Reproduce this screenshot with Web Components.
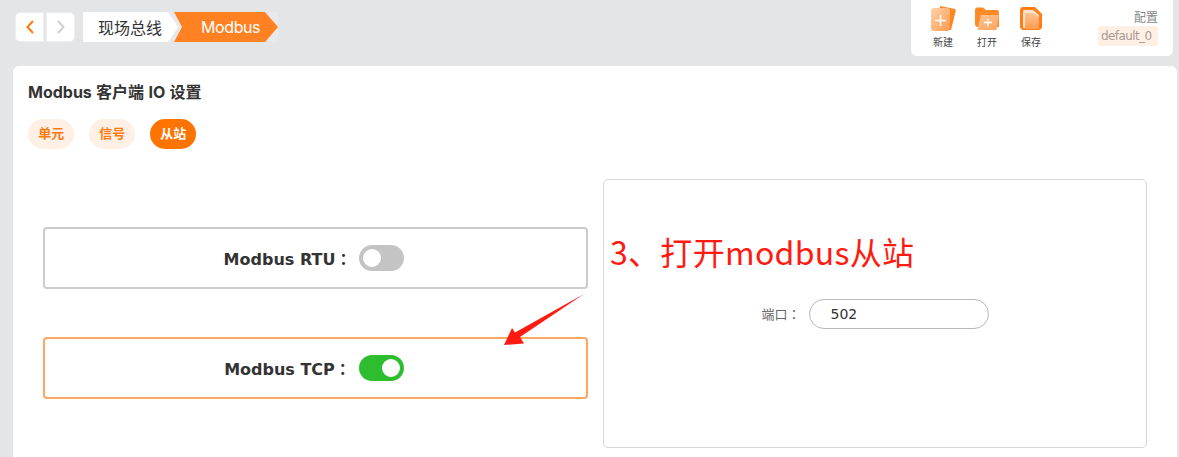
<!DOCTYPE html>
<html>
<head>
<meta charset="utf-8">
<style>
html, body { margin: 0; height: 100%; overflow: hidden; }
body { background: #e4e5e7; font-family: "Liberation Sans", "Noto Sans CJK SC", sans-serif; }
</style>
</head>
<body>
<app-page></app-page>

<script>
const CJK = '"DejaVu Sans", "Noto Sans CJK SC", sans-serif';
const CJK_TC = '"DejaVu Sans", "Noto Sans CJK TC", sans-serif';

class NavArrows extends HTMLElement {
    connectedCallback() {
        this.attachShadow({ mode: 'open' });
        this.shadowRoot.innerHTML = `
            <style>
                :host { display: flex; gap: 2px; margin-top: 12px; height: 30px; }
                button {
                    width: 29px; height: 30px; padding: 0; border: 1px solid #eceef0; background: #fff;
                    display: flex; align-items: center; justify-content: center;
                }
                .l { border-radius: 5px 0 0 5px; }
                .r { border-radius: 0 5px 5px 0; }
            </style>
            <button class="l"><svg width="10" height="16" viewBox="0 0 10 16"><path d="M8 2 L2.5 8 L8 14" fill="none" stroke="#ff7a0d" stroke-width="2"/></svg></button>
            <button class="r"><svg width="10" height="16" viewBox="0 0 10 16"><path d="M2 2 L7.5 8 L2 14" fill="none" stroke="#cfcfcf" stroke-width="2"/></svg></button>
        `;
    }
}

class BreadCrumb extends HTMLElement {
    connectedCallback() {
        this.attachShadow({ mode: 'open' });
        this.shadowRoot.innerHTML = `
            <style>
                :host { display: flex; margin: 12px 0 0 8px; height: 30px; background: #e9e9e9; }
                .a, .b { display: flex; align-items: center; height: 30px; }
                .a {
                    width: 95px; padding-left: 15px; box-sizing: border-box; background: #fff; color: #333; font: 16px ${CJK};
                    clip-path: polygon(0 0, 85px 0, 100% 50%, 85px 100%, 0 100%);
                }
                .b {
                    width: 104px; margin-left: -4px; padding-left: 27px; box-sizing: border-box; background: #ff8122; color: #fff; font: 16px "Inter", sans-serif; letter-spacing: -0.4px;
                    clip-path: polygon(0 0, 91px 0, 100% 50%, 91px 100%, 0 100%, 8px 50%);
                }
            </style>
            <div class="a">现场总线</div>
            <div class="b">Modbus</div>
        `;
    }
}

class ToolItem extends HTMLElement {
    connectedCallback() {
        this.attachShadow({ mode: 'open' });
        this.shadowRoot.innerHTML = `
            <style>
                :host { display: flex; flex-direction: column; align-items: center; width: 44px; font: 10px ${CJK}; color: #444; }
                .ic { height: 29px; margin-top: 6px; display: flex; align-items: flex-start; }
                .t { margin-top: 1px; line-height: 13px; }
            </style>
            <div class="ic"><slot name="icon"></slot></div>
            <div class="t"><slot></slot></div>
        `;
    }
}

class ToolBar extends HTMLElement {
    connectedCallback() {
        this.attachShadow({ mode: 'open' });
        this.shadowRoot.innerHTML = `
            <style>
                :host {
                    display: flex; margin-left: auto; margin-right: 6px; width: 262px; height: 56px; box-sizing: border-box;
                    background: #fff; border-radius: 0 0 6px 6px; padding-left: 10px;
                }
                .cfg { margin-left: auto; padding: 11px 15px 0 0; display: flex; flex-direction: column; align-items: flex-end; }
                .lab { font: 12px/14px ${CJK}; color: #888; }
                .val {
                    margin-top: 1px; width: 60px; height: 20px; box-sizing: border-box; background: #fff0e6; color: #a89a90;
                    font: 12px/20px "DejaVu Sans", sans-serif; padding-left: 3px; letter-spacing: -0.6px;
                }
                svg { display: block; }
            </style>
            <tool-item>
                <svg slot="icon" width="26" height="26" viewBox="0 0 26 26">
                    <defs><linearGradient id="g1" x1="0" y1="0" x2="1" y2="1"><stop offset="0" stop-color="#ffd2ad"/><stop offset="1" stop-color="#ff9a4d"/></linearGradient></defs>
                    <path d="M10 0 L25 3 Q26 3.500 25.700 5 L21 24 L10 24 Z" fill="#ff8520"/>
                    <rect x="1" y="2" width="19" height="23" rx="3" fill="url(#g1)"/>
                    <path d="M10.500 9 V20 M5 14.500 H16" stroke="#fff" stroke-width="1.500"/>
                </svg>新建</tool-item>
            <tool-item>
                <svg slot="icon" width="26" height="26" viewBox="0 0 26 26">
                    <defs><linearGradient id="g2" x1="0" y1="0" x2="1" y2="1"><stop offset="0" stop-color="#ffc597"/><stop offset="1" stop-color="#ffa25c"/></linearGradient></defs>
                    <path d="M1 5 Q1 1.500 3 1.500 H9 L12 4 H23 Q25 4 25 6 V21 H4 Q1 21 1 18 Z" fill="#ff8a28"/>
                    <path d="M7 9 H25 L22.500 24 H3.500 Z" fill="url(#g2)"/>
                    <path d="M14 12.500 V20.500 M10 16.500 H18" stroke="#fff" stroke-width="1.300"/>
                </svg>打开</tool-item>
            <tool-item>
                <svg slot="icon" width="26" height="26" viewBox="0 0 26 26">
                    <defs><linearGradient id="g3" x1="0" y1="0" x2="0" y2="1"><stop offset="0" stop-color="#ffc294"/><stop offset="1" stop-color="#ff9a4f"/></linearGradient></defs>
                    <path d="M5 1 H17 L24 8 V20 Q24 24 20 24 H6 Q2 24 2 20 V5 Q2 1 5 1 Z" fill="#ff7d12"/>
                    <path d="M6 4 H15 L21 9 V22 H5 V5 Z" fill="#ffe3cd"/>
                    <path d="M7 7 H15 L21 11 V23 H7 Z" fill="url(#g3)"/>
                </svg>保存</tool-item>
            <div class="cfg"><div class="lab">配置</div><div class="val">default_0</div></div>
        `;
    }
}

class TabPills extends HTMLElement {
    connectedCallback() {
        this.attachShadow({ mode: 'open' });
        this.shadowRoot.innerHTML = `
            <style>
                :host { display: flex; gap: 14.6px; margin-top: 16px; }
                span {
                    width: 46.4px; height: 30px; border-radius: 15px; background: #fff0e6; color: #ff7a0d;
                    font: 700 13px/30px ${CJK}; text-align: center;
                }
                .on { background: #ff7300; color: #fff; }
            </style>
            <span>单元</span><span>信号</span><span class="on">从站</span>
        `;
    }
}

class ModeBox extends HTMLElement {
    connectedCallback() {
        const on = this.hasAttribute('on');
        this.attachShadow({ mode: 'open' });
        this.shadowRoot.innerHTML = `
            <style>
                :host {
                    display: flex; align-items: center; justify-content: center; gap: 8px;
                    width: 545px; height: 62px; box-sizing: border-box; border-radius: 4px; padding-right: 3px;
                    border: 2px solid ${on ? '#ffa862' : '#cccccc'};
                    font: 700 16px ${CJK_TC}; color: #333;
                }
                .sw {
                    width: 45px; height: 26px; border-radius: 13px; background: ${on ? '#2ebd2e' : '#c4c4c4'};
                    display: flex; align-items: center; padding: 0 4px; box-sizing: border-box;
                    justify-content: ${on ? 'flex-end' : 'flex-start'};
                }
                .sw i { width: 18px; height: 18px; border-radius: 50%; background: #fff; }
            </style>
            <span><slot></slot></span>
            <div class="sw"><i></i></div>
        `;
    }
}

class PortPanel extends HTMLElement {
    connectedCallback() {
        this.attachShadow({ mode: 'open' });
        this.shadowRoot.innerHTML = `
            <style>
                :host {
                    display: flex; align-items: center; justify-content: center; gap: 8px;
                    width: 544px; height: 269px; box-sizing: border-box;
                    border: 1px solid #d6d6d6; border-radius: 5px;
                    font: 13px ${CJK_TC}; color: #666;
                }
                .inp {
                    width: 180px; height: 30px; box-sizing: border-box; border: 1px solid #b8b8b8; border-radius: 15px;
                    padding-left: 21px; font: 14px/28px "DejaVu Sans", sans-serif; color: #333;
                }
            </style>
            <span>端口：</span><div class="inp">502</div>
        `;
    }
}

class MainCard extends HTMLElement {
    connectedCallback() {
        this.attachShadow({ mode: 'open' });
        this.shadowRoot.innerHTML = `
            <style>
                :host {
                    display: block; position: relative; margin: 10px 2px 0 13px; height: 391px; box-sizing: border-box;
                    background: #fff; border-radius: 6px 6px 0 0; padding: 16px 0 0 15px;
                }
                h1 { margin: 0; font: 700 16px/21px "Inter", "Noto Sans CJK SC", sans-serif; color: #333; word-spacing: 0.5px; }
                .cols { display: flex; margin-top: 30px; }
                .left { display: flex; flex-direction: column; gap: 48px; margin: 48px 15px 0 15px; }
                .note {
                    position: absolute; left: 597px; top: 162px; font: 32px/46px "Noto Sans CJK SC", sans-serif; color: #ff1a12;
                    white-space: nowrap; letter-spacing: 0.3px;
                }
                svg { position: absolute; left: 485px; top: 226px; }
            </style>
            <h1>Modbus 客户端 IO 设置</h1>
            <tab-pills></tab-pills>
            <div class="cols">
                <div class="left">
                    <mode-box>Modbus RTU：</mode-box>
                    <mode-box on>Modbus TCP：</mode-box>
                </div>
                <port-panel></port-panel>
            </div>
            <div class="note">3、打开modbus从站</div>
            <svg width="90" height="60" viewBox="0 0 90 60"><path d="M86 2 L22 45 L26 51.500 L6 53 L14 36 L17 40.500 Z" fill="#ff1a12"/></svg>
        `;
    }
}

class AppPage extends HTMLElement {
    connectedCallback() {
        this.attachShadow({ mode: 'open' });
        this.shadowRoot.innerHTML = `
            <style>
                :host { display: block; height: 457px; overflow: hidden; }
                .top { display: flex; height: 56px; padding-left: 15px; }
            </style>
            <div class="top">
                <nav-arrows></nav-arrows>
                <bread-crumb></bread-crumb>
                <tool-bar></tool-bar>
            </div>
            <main-card></main-card>
        `;
    }
}

customElements.define('nav-arrows', NavArrows);
customElements.define('bread-crumb', BreadCrumb);
customElements.define('tool-item', ToolItem);
customElements.define('tool-bar', ToolBar);
customElements.define('tab-pills', TabPills);
customElements.define('mode-box', ModeBox);
customElements.define('port-panel', PortPanel);
customElements.define('main-card', MainCard);
customElements.define('app-page', AppPage);
</script>
</body>
</html>
